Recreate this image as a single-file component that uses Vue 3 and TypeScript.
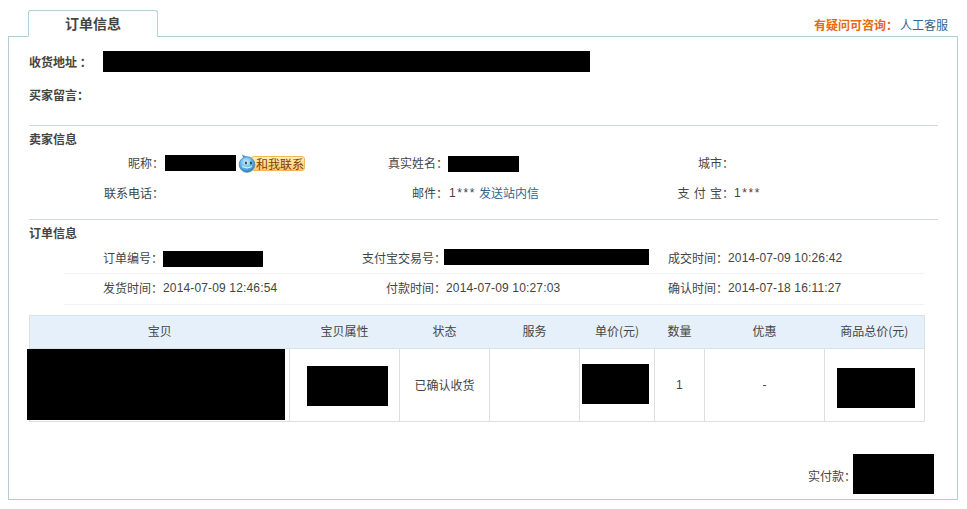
<script setup lang="ts">
const columns = ['宝贝', '宝贝属性', '状态', '服务', '单价(元)', '数量', '优惠', '商品总价(元)']
</script>

<template>
  <div class="page">
    <header class="top">
      <div class="tab">订单信息</div>
      <div class="help"><b>有疑问可咨询：</b><a>人工客服</a></div>
    </header>

    <main class="panel">
      <section class="address">
        <div class="addr-row first">
          <b class="addr-label">收货地址 ：</b>
          <span class="mask m-addr"></span>
        </div>
        <div class="addr-row second"><b class="addr-label">买家留言：</b></div>
      </section>

      <section class="block seller">
        <h3>卖家信息</h3>
        <div class="grid seller-grid">
          <span class="lb">昵称：</span>
          <span class="val nick">
            <span class="mask m-nick"></span>
            <span class="contact">
              <svg class="bubble" width="18" height="19" viewBox="0 0 18 19">
                <defs>
                  <radialGradient id="bb" cx="45%" cy="35%" r="65%">
                    <stop offset="0" stop-color="#d4f1fb" />
                    <stop offset="0.6" stop-color="#62b4e4" />
                    <stop offset="1" stop-color="#2a7cb8" />
                  </radialGradient>
                </defs>
                <path d="M5 3.5 L4 0.5 L8.5 2.6 Z" fill="#4a9bd0" />
                <circle cx="9" cy="10.5" r="7.8" fill="url(#bb)" stroke="#3c86b8" stroke-width="0.8" />
                <ellipse cx="8" cy="9" rx="0.9" ry="1.4" fill="#16344e" />
                <ellipse cx="13" cy="9" rx="0.9" ry="1.4" fill="#16344e" />
                <path d="M4 12.5 Q9 15.5 14 12.5" fill="none" stroke="#e8f6fd" stroke-width="1" />
              </svg>
              <span class="chat">和我联系</span>
            </span>
          </span>
          <span class="lb">真实姓名：</span>
          <span class="val"><span class="mask m-name"></span></span>
          <span class="lb">城市：</span>
          <span class="val"></span>

          <span class="lb">联系电话：</span>
          <span class="val"></span>
          <span class="lb">邮件：</span>
          <span class="val"><span class="num stars mail-stars">1***</span><a class="mail">发送站内信</a></span>
          <span class="lb spaced">支 付 宝：</span>
          <span class="val"><span class="num stars">1***</span></span>
        </div>
      </section>

      <section class="block order">
        <h3>订单信息</h3>
        <div class="order-rows">
          <div class="grid order-grid">
            <span class="lb">订单编号：</span>
            <span class="val"><span class="mask m-order"></span></span>
            <span class="lb">支付宝交易号：</span>
            <span class="val"><span class="mask m-alipay"></span></span>
            <span class="lb">成交时间：</span>
            <span class="val num">2014-07-09 10:26:42</span>
          </div>
          <div class="grid order-grid second-row">
            <span class="lb">发货时间：</span>
            <span class="val num">2014-07-09 12:46:54</span>
            <span class="lb">付款时间：</span>
            <span class="val num">2014-07-09 10:27:03</span>
            <span class="lb">确认时间：</span>
            <span class="val num">2014-07-18 16:11:27</span>
          </div>
        </div>
      </section>

      <table class="goods">
        <colgroup>
          <col class="c1" /><col class="c2" /><col class="c3" /><col class="c3" />
          <col class="c5" /><col class="c6" /><col class="c7" /><col class="c8" />
        </colgroup>
        <thead>
          <tr><th v-for="c in columns" :key="c">{{ c }}</th></tr>
        </thead>
        <tbody>
          <tr>
            <td class="top-cell"><span class="mask m-goods"></span></td>
            <td><span class="mask m-prop"></span></td>
            <td>已确认收货</td>
            <td></td>
            <td><span class="mask m-price"></span></td>
            <td class="num">1</td>
            <td class="num">-</td>
            <td><span class="mask m-total"></span></td>
          </tr>
        </tbody>
      </table>

      <footer class="pay">
        <span class="pay-label">实付款：</span>
        <span class="mask m-pay"></span>
      </footer>
    </main>
  </div>
</template>

<style>
html, body { background: #fff; margin: 0; }
</style>

<style scoped>
.page {
  width: 967px;
  height: 509px;
  box-sizing: border-box;
  padding-top: 10px;
  overflow: hidden;
  font: 12px/18px "Noto Sans CJK SC", "Liberation Sans", sans-serif;
  color: #444;
  background: #fff;
}
a { color: #36648f; }
b { font-weight: 700; }
.mask { display: block; flex: none; background: #000; }

.top {
  display: flex;
  justify-content: space-between;
  align-items: flex-end;
  padding: 0 19px 0 28px;
}
.tab {
  position: relative;
  z-index: 1;
  width: 128px;
  height: 25px;
  margin-bottom: -1px;
  border: 1px solid #b4cfe0;
  border-bottom: 1px solid #fff;
  border-radius: 3px 3px 0 0;
  background: #fff;
  text-align: center;
  font-size: 14px;
  font-weight: 700;
  line-height: 24px;
  color: #444;
}
.help { padding-bottom: 2px; }
.help b { color: #e36c12; }
.help a { margin-left: 2px; }

.panel {
  display: flex;
  flex-direction: column;
  width: 948px;
  height: 462px;
  margin-left: 8px;
  border: 1px solid #b4cbd8;
  background: #fff;
}

.address { height: 88px; padding: 14px 0 0 20px; box-sizing: border-box; }
.addr-row { display: flex; align-items: center; }
.addr-row.first { height: 21px; }
.addr-row.second { height: 18px; margin-top: 14px; }
.addr-label { width: 74px; color: #444; }
.m-addr { width: 487px; height: 21px; }

.block {
  margin: 0 19px 0 20px;
  border-top: 1px solid #ced9df;
}
.block h3 {
  margin: 0;
  padding-top: 4px;
  font-size: 12px;
  line-height: 17px;
  font-weight: 700;
  color: #444;
}

.grid { display: grid; align-items: center; }
.lb { text-align: right; white-space: pre; }
.seller-grid .lb:nth-child(6n + 1) { padding-right: 1px; }
.spaced { word-spacing: 1.5px; }
.val { display: flex; align-items: center; gap: 3px; height: 18px; white-space: pre; }
.num { font-family: "Liberation Sans", "Noto Sans CJK SC", sans-serif; letter-spacing: 0.15px; }
.stars { letter-spacing: 1.6px; }
.mail-stars { margin-left: 1px; }

.seller { height: 93px; }
.seller-grid {
  grid-template-columns: 136px 165px 118px 172px 114px 1fr;
  grid-auto-rows: 30px;
  margin-top: 1px;
}
.nick { gap: 2px; }
.m-nick { width: 71px; height: 16px; }
.m-name { width: 71px; height: 16px; margin-top: 2px; }
.contact { display: flex; align-items: center; }
.bubble { position: relative; z-index: 1; margin-right: -5px; }
.chat {
  display: block;
  width: 54px;
  height: 15px;
  box-sizing: border-box;
  padding-left: 4px;
  border: 1px solid #efb95a;
  border-radius: 3px;
  background: linear-gradient(#ffefb8, #fcc970);
  color: #8a3a00;
  font-size: 12px;
  line-height: 13px;
  white-space: nowrap;
}

.order { height: 95px; }
.order-rows { margin: 2px 14px 0 35px; }
.order-grid {
  grid-template-columns: 99px 177px 106px 182px 100px 1fr;
  height: 30px;
  border-bottom: 1px solid #f0f2f3;
}
.second-row { box-sizing: border-box; height: 31px; padding-bottom: 2px; }
.m-order { width: 100px; height: 16px; margin-top: 2px; }
.m-alipay { width: 205px; height: 16px; margin: -2px 0 0 -2px; }

.goods {
  width: 896px;
  height: 107px;
  margin-left: 20px;
  border-collapse: collapse;
  table-layout: fixed;
  text-align: center;
  color: #444;
}
.c1 { width: 260px; }
.c2 { width: 110px; }
.c3 { width: 90px; }
.c5 { width: 75px; }
.c6 { width: 50px; }
.c7 { width: 120px; }
.c8 { width: 100px; }
.goods th {
  height: 33px;
  padding: 0 0 2px;
  box-sizing: border-box;
  border: 1px solid #d8e1e8;
  border-width: 1px 0;
  background: #e6f0fb;
  font-weight: 400;
}
.goods th:first-child { border-left-width: 1px; }
.goods th:last-child { border-right-width: 1px; }
.goods td {
  height: 72px;
  padding: 0;
  border: 1px solid #dcdfe2;
}
.top-cell { vertical-align: top; }
.m-goods { position: relative; width: 258px; height: 71px; margin-left: -3px; }
.m-prop { width: 81px; height: 40px; margin: 2px 0 0 17px; }
.m-price { width: 67px; height: 40px; margin: -2px 0 0 2px; }
.m-total { width: 78px; height: 40px; margin: 6px 0 0 12px; }

.pay {
  display: flex;
  justify-content: flex-end;
  align-items: center;
  margin-top: auto;
  padding: 0 23px 5px 0;
}
.pay-label { margin: 4px -3px 0 0; }
.m-pay { width: 81px; height: 40px; }
</style>
